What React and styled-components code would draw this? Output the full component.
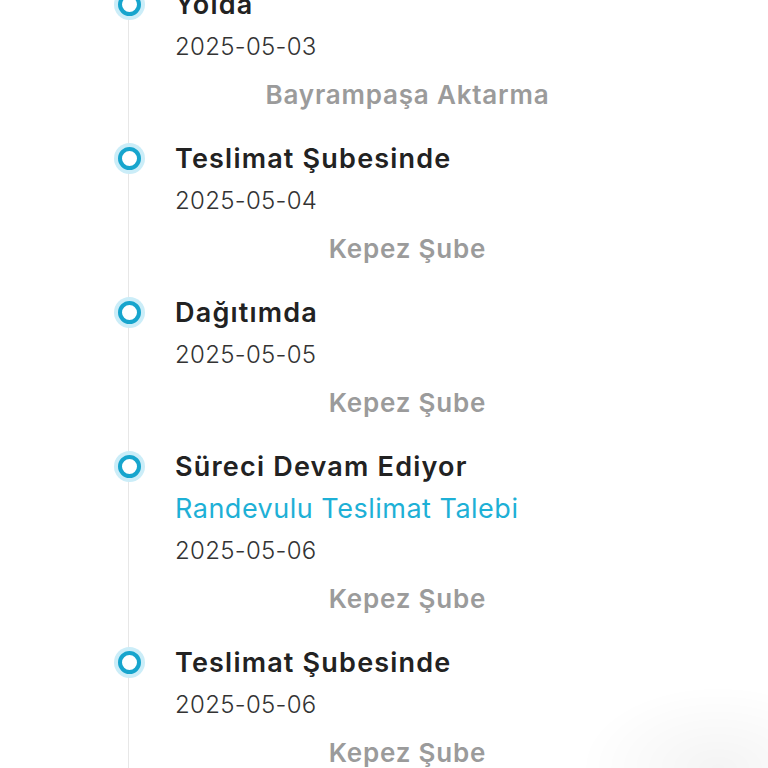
import styled, { createGlobalStyle } from "styled-components";

const GlobalStyle = createGlobalStyle`
  * { box-sizing: border-box; }
  html, body { margin: 0; padding: 0; background: #fff; }
  body { font-family: Inter, "Noto Sans", Arial, sans-serif; overflow: hidden; }
`

const Page = styled.div`
  width: 768px;
  height: 768px;
  overflow: hidden;
  background: #fff;
`
const List = styled.ul`
  list-style: none;
  margin: -17px 0 0 0;
  padding: 0 128px 0 114px;
  background: linear-gradient(#e7e7e7, #e7e7e7) no-repeat 128px 0 / 1px 100%;
`
const Item = styled.li`
  display: flex;
  gap: 30px;
  padding-bottom: 21px;
`
const Marker = styled.div`
  flex: 0 0 30px;
  height: 43px;
  display: flex;
  align-items: center;
  justify-content: center;
`
const Dot = styled.span`
  width: 31px;
  height: 31px;
  border-radius: 50%;
  background: #cbedf8;
  display: flex;
  align-items: center;
  justify-content: center;
  &::after {
    content: "";
    width: 15px;
    height: 15px;
    border-radius: 50%;
    border: 4px solid #17a5cd;
    background: #fff;
  }
`
const Content = styled.div`
  flex: 1;
  display: flex;
  flex-direction: column;
`
const Title = styled.div`
  font-size: 27px;
  font-weight: 600;
  letter-spacing: 1.2px;
  line-height: 43px;
  color: #222;
`
const Note = styled.div`
  font-size: 27px;
  font-weight: 400;
  letter-spacing: 0.5px;
  line-height: 42px;
  color: #1eb0d6;
`
const DateText = styled.div`
  font-size: 24px;
  font-weight: 300;
  letter-spacing: 0.3px;
  line-height: 42px;
  color: #333;
`
const Place = styled.div`
  margin-top: 5px;
  font-size: 26px;
  font-weight: 600;
  letter-spacing: 0.8px;
  line-height: 43px;
  color: #9b9b9b;
  text-align: center;
`
const CornerShade = styled.div`
  position: fixed;
  right: 0;
  bottom: 0;
  width: 200px;
  height: 90px;
  background: radial-gradient(ellipse at 75% 100%, rgba(0, 0, 0, 0.045), rgba(0, 0, 0, 0) 65%);
  pointer-events: none;
`

const steps = [
  { title: "Yolda", date: "2025-05-03", place: "Bayrampaşa Aktarma" },
  { title: "Teslimat Şubesinde", date: "2025-05-04", place: "Kepez Şube" },
  { title: "Dağıtımda", date: "2025-05-05", place: "Kepez Şube" },
  { title: "Süreci Devam Ediyor", note: "Randevulu Teslimat Talebi", date: "2025-05-06", place: "Kepez Şube" },
  { title: "Teslimat Şubesinde", date: "2025-05-06", place: "Kepez Şube" },
];

const App = () => {
  return (
    <Page>
      <GlobalStyle />
      <List>
        {steps.map((it, idx) => (
          <Item key={idx}>
            <Marker><Dot /></Marker>
            <Content>
              <Title>{it.title}</Title>
              {it.note && <Note>{it.note}</Note>}
              <DateText>{it.date}</DateText>
              <Place>{it.place}</Place>
            </Content>
          </Item>
        ))}
      </List>
      <CornerShade />
    </Page>
  )
}

export default App;
